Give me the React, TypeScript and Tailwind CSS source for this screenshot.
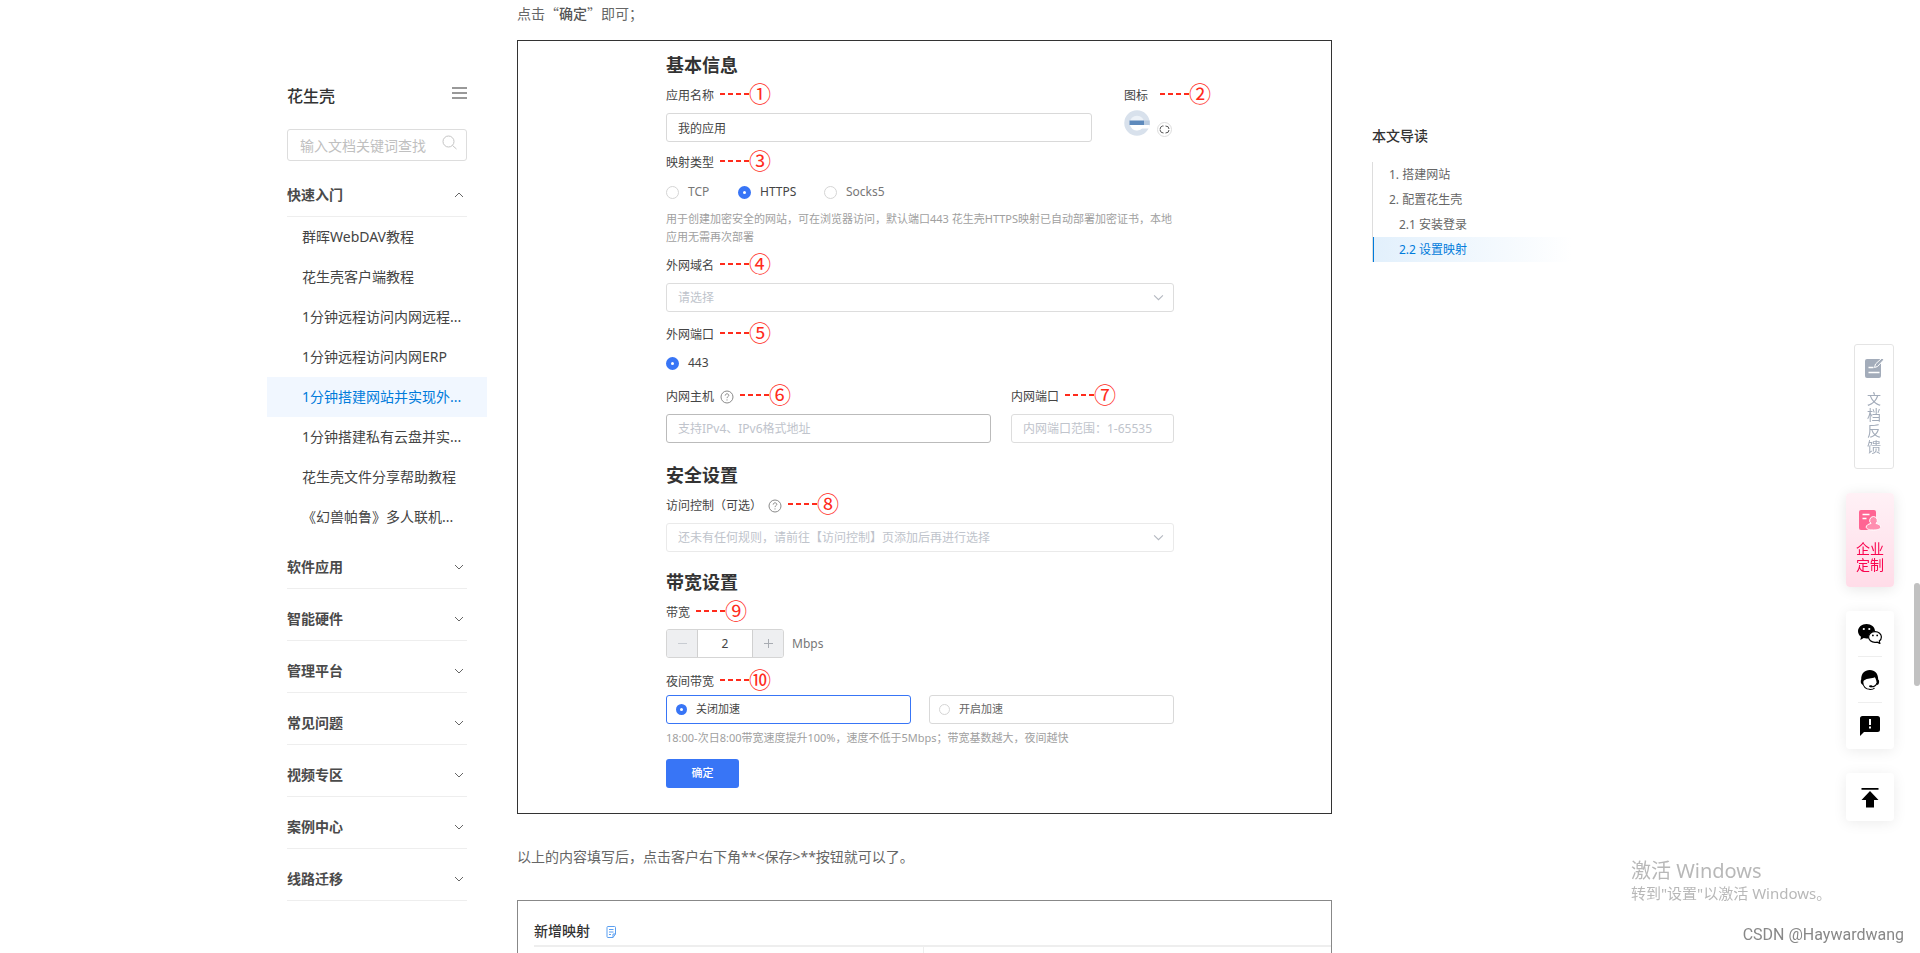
import { useState } from "react";

const groups = [
  "软件应用",
  "智能硬件",
  "管理平台",
  "常见问题",
  "视频专区",
  "案例中心",
  "线路迁移",
];

const guides = [
  "群晖WebDAV教程",
  "花生壳客户端教程",
  "1分钟远程访问内网远程...",
  "1分钟远程访问内网ERP",
  "1分钟搭建网站并实现外...",
  "1分钟搭建私有云盘并实...",
  "花生壳文件分享帮助教程",
  "《幻兽帕鲁》多人联机...",
];

const toc = [
  { text: "1. 搭建网站", sub: false },
  { text: "2. 配置花生壳", sub: false },
  { text: "2.1 安装登录", sub: true },
  { text: "2.2 设置映射", sub: true },
];

const Chevron: React.FC<{ className?: string }> = ({ className }) => (
  <svg viewBox="0 0 10 6" fill="none" stroke="currentColor" className={className}>
    <path d="M1 1l4 4 4-4" />
  </svg>
);

const Marker: React.FC<{ n: string }> = ({ n }) => (
  <span className="flex h-[22px] items-center text-[#ff2b1c]">
    <svg width="29" height="2" stroke="currentColor" strokeWidth="2">
      <path d="M0 1h29" strokeDasharray="5 3" />
    </svg>
    <span className="w-[22px] pb-1 text-center text-[22px] leading-[22px] font-['Noto_Sans_CJK_SC',sans-serif]">
      {n}
    </span>
  </span>
);

const Help = () => (
  <svg width="14" height="14" viewBox="0 0 14 14" fill="none" stroke="#8a8a8a" className="mb-[2px]">
    <circle cx="7" cy="7" r="6" />
    <path d="M5.2 5.6c0-2.400 3.600-2.300 3.600-.2 0 1.200-1.800 1.300-1.800 2.700M7 9.400v1.100" />
  </svg>
);

interface LabelProps {
  text: string;
  n: string;
  htmlFor?: string;
  help?: boolean;
}

const FieldLabel: React.FC<LabelProps> = ({ text, n, htmlFor, help }: LabelProps) => (
  <div className="flex h-[22px] items-end gap-[6px]">
    <label htmlFor={htmlFor} className="text-xs leading-[18px] text-[#444]">
      {text}
    </label>
    {help && <Help />}
    <Marker n={n} />
  </div>
);

interface RadioProps {
  name: string;
  text: string;
  checked?: boolean;
}

const Radio: React.FC<RadioProps> = ({ name, text, checked }: RadioProps) => (
  <label className="flex items-center gap-[9px] text-xs leading-[18px] text-[#777] has-checked:text-[#444]">
    <input
      type="radio"
      name={name}
      defaultChecked={checked}
      className="size-[13px] appearance-none rounded-full border border-[#d5d5d5] bg-white checked:border-[5px] checked:border-[#3875f6]"
    />
    {text}
  </label>
);

const SpeedOption: React.FC<RadioProps> = ({ name, text, checked }: RadioProps) => (
  <label className="flex h-[29px] flex-1 items-center gap-[9px] rounded-[3px] border border-[#d9d9d9] px-[9px] text-[11px] text-[#666] has-checked:border-[#3875f6] has-checked:text-[#444]">
    <input
      type="radio"
      name={name}
      defaultChecked={checked}
      className="size-[11px] appearance-none rounded-full border border-[#d5d5d5] bg-white checked:border-4 checked:border-[#3875f6]"
    />
    {text}
  </label>
);

interface SelectProps {
  id: string;
  placeholder: string;
  className: string;
}

const SelectBox: React.FC<SelectProps> = ({ id, placeholder, className }: SelectProps) => (
  <div className="relative mt-2">
    <select
      id={id}
      className={`block h-[29px] w-full appearance-none rounded-[3px] border bg-white px-[11px] text-xs text-[#c0c4cc] ${className}`}
    >
      <option>{placeholder}</option>
    </select>
    <Chevron className="pointer-events-none absolute top-[11px] right-[10px] h-[7px] w-[11px] text-[#b4b8c0]" />
  </div>
);

const Sidebar = () => {
  const [open, setOpen] = useState(true);

  return (
    <aside className="w-[220px] shrink-0 pt-20">
      <div className="flex h-8 items-center justify-between px-5">
        <h1 className="text-base font-medium text-[#333]">花生壳</h1>
        <button aria-label="菜单" className="flex h-[18px] w-[15px] flex-col gap-[3px]">
          <span className="h-[2px] w-full bg-[#999]" />
          <span className="h-[2px] w-full bg-[#999]" />
          <span className="h-[2px] w-full bg-[#999]" />
        </button>
      </div>
      <div className="relative mx-5 mt-[17px]">
        <input
          aria-label="搜索"
          placeholder="输入文档关键词查找"
          className="block h-8 w-full rounded-[3px] border border-[#ddd] pr-8 pl-3 text-sm text-[#444] placeholder:text-[#c0c0c0]"
        />
        <svg
          viewBox="0 0 15 15"
          fill="none"
          stroke="#c4c4c4"
          className="absolute top-[6px] right-[10px] size-[15px]"
        >
          <circle cx="6.500" cy="6.500" r="5.500" />
          <path d="M10.500 10.500l4 3.500" />
        </svg>
      </div>
      <div className="mt-1">
        <button onClick={() => setOpen(!open)} className="block w-full px-5 pt-[10px]">
          <span className="flex h-[42px] items-center justify-between border-b border-[#eee] pr-[3px] pb-px text-sm font-bold text-[#4a4a4a]">
            快速入门
            <Chevron className="h-[6px] w-[10px] rotate-180 text-[#666]" />
          </span>
        </button>
        {open && (
          <ul>
            {guides.map((g, i) => (
              <li key={g}>
                <a
                  href="#"
                  className={`block h-10 pl-[35px] text-sm leading-10 whitespace-nowrap ${
                    i === 4 ? "bg-[#f1f7ff] text-[#007bdb]" : "text-[#444]"
                  }`}
                >
                  {g}
                </a>
              </li>
            ))}
          </ul>
        )}
        {groups.map((g) => (
          <button key={g} className="block w-full px-5 pt-[10px]">
            <span className="flex h-[42px] items-center justify-between border-b border-[#eee] pr-[3px] pb-px text-sm font-bold text-[#4a4a4a]">
              {g}
              <Chevron className="h-[6px] w-[10px] text-[#666]" />
            </span>
          </button>
        ))}
      </div>
    </aside>
  );
};

const MappingForm = () => (
  <form
    onSubmit={(e) => e.preventDefault()}
    className="mt-4 border border-[#333] pt-[10px] pb-[25px] pl-[148px]"
  >
    <div className="w-[508px]">
      <h2 className="text-lg leading-7 font-bold text-[#333]">基本信息</h2>
      <div className="mt-1 flex gap-8">
        <div className="w-[426px] shrink-0">
          <FieldLabel text="应用名称" n="①" htmlFor="app" />
          <input
            id="app"
            defaultValue="我的应用"
            className="mt-2 block h-[29px] w-full rounded-[3px] border border-[#d9d9d9] px-[11px] text-xs text-[#444]"
          />
        </div>
        <div className="shrink-0">
          <div className="flex h-[22px] items-end gap-3 text-xs leading-[18px] text-[#444]">
            图标
            <Marker n="②" />
          </div>
          <div className="mt-1 flex items-end gap-[7px]">
            <svg width="26" height="28" viewBox="0 0 26 28">
              <circle cx="13" cy="14" r="10" fill="#edf2f8" stroke="#d8e1ec" strokeWidth="5.500" />
              <path d="M6 16h19.500v3.500H18q-2 2-5 2-5 0-7-5.500z" fill="#fff" />
              <path d="M20 11.500h5.700V16H20z" fill="#b9cbe0" />
              <path d="M5.500 11.500H20V16H5.500z" fill="#5e8abc" />
            </svg>
            <button
              type="button"
              aria-label="更换图标"
              className="flex size-[15px] items-center justify-center rounded-full border border-[#ddd]"
            >
              <svg width="11" height="9" viewBox="0 0 11 9" fill="none" stroke="#555">
                <path d="M4.500 1h-1Q1 1.500 1 4.500M1 5q.5 3 3.500 3M6.500 1Q10 1 10 4M10 5q0 3-3.500 3" />
              </svg>
            </button>
          </div>
        </div>
      </div>

      <div className="mt-2">
        <FieldLabel text="映射类型" n="③" />
        <div className="mt-[11px] flex">
          <div className="w-[72px]">
            <Radio name="type" text="TCP" />
          </div>
          <div className="w-[86px]">
            <Radio name="type" text="HTTPS" checked />
          </div>
          <Radio name="type" text="Socks5" />
        </div>
        <p className="mt-[9px] text-[11px] leading-[18px] text-[#a0a0a0]">
          用于创建加密安全的网站，可在浏览器访问，默认端口443
          花生壳HTTPS映射已自动部署加密证书，本地应用无需再次部署
        </p>
      </div>

      <div className="mt-[7px]">
        <FieldLabel text="外网域名" n="④" htmlFor="domain" />
        <SelectBox id="domain" placeholder="请选择" className="border-[#ddd]" />
      </div>

      <div className="mt-[10px]">
        <FieldLabel text="外网端口" n="⑤" />
        <div className="mt-[10px]">
          <Radio name="port" text="443" checked />
        </div>
      </div>

      <div className="mt-3 flex gap-5">
        <div className="w-[325px]">
          <FieldLabel text="内网主机" n="⑥" htmlFor="host" help />
          <input
            id="host"
            placeholder="支持IPv4、IPv6格式地址"
            className="mt-2 block h-[29px] w-full rounded-[3px] border border-[#bbb] px-[11px] text-xs placeholder:text-[#c0c4cc]"
          />
        </div>
        <div className="w-[163px]">
          <FieldLabel text="内网端口" n="⑦" htmlFor="inner" />
          <input
            id="inner"
            placeholder="内网端口范围：1-65535"
            className="mt-2 block h-[29px] w-full rounded-[3px] border border-[#ddd] px-[11px] text-xs placeholder:text-[#c0c4cc]"
          />
        </div>
      </div>

      <h2 className="mt-[18px] text-lg leading-7 font-bold text-[#333]">安全设置</h2>
      <div className="mt-1">
        <FieldLabel text="访问控制（可选）" n="⑧" htmlFor="rule" help />
        <SelectBox
          id="rule"
          placeholder="还未有任何规则，请前往【访问控制】页添加后再进行选择"
          className="border-[#eaeaea]"
        />
      </div>

      <h2 className="mt-4 text-lg leading-7 font-bold text-[#333]">带宽设置</h2>
      <div className="mt-1">
        <FieldLabel text="带宽" n="⑨" htmlFor="band" />
        <div className="mt-[7px] flex items-center gap-2 text-xs text-[#777]">
          <div className="flex h-[29px] w-[118px] overflow-hidden rounded-[3px] border border-[#d5d5d5]">
            <button type="button" aria-label="减少" className="flex w-[30px] items-center justify-center bg-[#eeeff1]">
              <span className="h-px w-[9px] bg-[#c8ccd2]" />
            </button>
            <input
              id="band"
              defaultValue="2"
              className="w-0 flex-1 border-x border-[#d0d0d0] text-center text-xs text-[#444]"
            />
            <button type="button" aria-label="增加" className="flex w-[30px] items-center justify-center bg-[#eeeff1]">
              <svg width="9" height="9" stroke="#a8acb2">
                <path d="M0 4.500h9M4.500 0v9" />
              </svg>
            </button>
          </div>
          Mbps
        </div>
      </div>

      <div className="mt-[11px]">
        <FieldLabel text="夜间带宽" n="⑩" />
        <div className="mt-1 flex gap-[18px]">
          <SpeedOption name="night" text="关闭加速" checked />
          <SpeedOption name="night" text="开启加速" />
        </div>
        <p className="mt-[5px] text-[11px] leading-[18px] text-[#a0a0a0]">
          18:00-次日8:00带宽速度提升100%，速度不低于5Mbps；带宽基数越大，夜间越快
        </p>
      </div>

      <button className="mt-3 block h-[29px] w-[73px] rounded-[3px] bg-[#3875f6] text-[11px] font-medium text-white">
        确定
      </button>
    </div>
  </form>
);

const Toc = () => (
  <nav className="w-[281px] shrink-0 pt-[126px]">
    <h3 className="text-sm leading-5 font-medium text-[#333]">本文导读</h3>
    <ul className="mt-4 w-[200px] border-l border-[#ddd]">
      {toc.map((t, i) => (
        <li key={t.text}>
          <a
            href="#"
            className={`block border-l text-xs leading-[25px] ${t.sub ? "pl-[25px]" : "pl-[15px]"} ${
              i === 3
                ? "border-[#007bdb] bg-linear-to-r from-[#e2f0fc] to-white text-[#007bdb]"
                : "border-transparent text-[#666]"
            }`}
          >
            {t.text}
          </a>
        </li>
      ))}
    </ul>
  </nav>
);

const ToolRail = () => (
  <div className="fixed top-[344px] right-[26px] flex flex-col items-end gap-6">
    <button className="flex h-[125px] w-10 flex-col items-center rounded-[3px] border border-[#e4e4e4] bg-white pt-3 text-sm leading-4 text-[#a3acba]">
      <svg width="20" height="22" viewBox="0 0 20 22">
        <path d="M1 4a2 2 0 0 1 2-2h14v17a2 2 0 0 1-2 2H3a2 2 0 0 1-2-2z" fill="#a3acba" />
        <path d="M4.500 10.500h5M4.500 15.500h11" stroke="#fff" strokeWidth="1.600" />
        <path d="M10.500 10.500l1-3.500 6.500-6 1.800 1.800-6.300 6.700z" fill="#a3acba" stroke="#fff" />
      </svg>
      <span className="mt-3 w-[14px]">文档反馈</span>
    </button>
    <button className="flex h-[94px] w-12 flex-col items-center rounded bg-linear-to-b from-[#fff1f6] to-[#ffdce8] pt-[17px] text-sm leading-4 text-[#f9054f] shadow-[0_2px_14px_rgba(0,0,0,0.1)]">
      <svg width="22" height="21" viewBox="0 0 22 21">
        <path d="M2 0h13a2 2 0 0 1 2 2v18H2a2 2 0 0 1-2-2V2a2 2 0 0 1 2-2z" fill="#ff6593" />
        <path d="M3.500 4.500h7M3.500 8.500h4" stroke="#fff" strokeWidth="1.500" />
        <path
          d="M14.500 6.500a4 4 0 0 1 2.500 7c3 .5 4.800 2 4.800 3.500 0 2-3 3-7.300 3s-7.300-1-7.300-3c0-1.500 1.800-3 4.800-3.500a4 4 0 0 1 2.500-7z"
          fill="#ff8fb0"
          stroke="#fff"
        />
      </svg>
      <span className="mt-[10px] w-7">企业定制</span>
    </button>
    <div className="flex w-12 flex-col items-center rounded bg-white shadow-[0_2px_14px_rgba(0,0,0,0.08)]">
      <button aria-label="微信" className="flex h-[46px] w-6 items-center justify-center border-b border-[#eee]">
        <svg width="24" height="20" viewBox="0 0 24 20">
          <path d="M8.500 0C3.800 0 0 3.200 0 7.200c0 2.200 1.200 4.200 3 5.500L2.300 16l3.400-1.900c.9.300 1.800.400 2.800.400 4.700 0 8.500-3.200 8.500-7.300S13.200 0 8.500 0z" />
          <path
            d="M17 7.600c-3.700 0-6.400 2.400-6.400 5.400s2.700 5.400 6.400 5.400c.8 0 1.500-.1 2.200-.3l2.600 1.300-.5-2.300c1.300-1 2.100-2.400 2.100-4.100 0-3-2.700-5.400-6.400-5.400z"
            fill="#fff"
            stroke="#000"
            strokeWidth="1.200"
          />
          <circle cx="5.800" cy="5" r="1.100" fill="#fff" />
          <circle cx="11.300" cy="5" r="1.100" fill="#fff" />
          <circle cx="14.900" cy="11.400" r=".9" />
          <circle cx="19.200" cy="11.400" r=".9" />
        </svg>
      </button>
      <button aria-label="客服" className="flex h-[46px] w-6 items-center justify-center border-b border-[#eee]">
        <svg width="20" height="22" viewBox="0 0 20 22">
          <path d="M1.200 10.500C1.200 4.500 4.500 1 9.800 1c5.200 0 8.300 3.500 8.400 9.500.8.500 1 1.500.9 2.700-.1 1.600-.9 2.600-2.300 2.800 0-3.500-.6-5.500-1.900-7.800-3.200 1.600-7.300.6-11 3.300-.7 1-.6 2.500-.6 4.200C1.700 15.500.8 14.500.8 13c0-1 0-2 .4-2.500z" />
          <path
            d="M2.400 13c.8 4.500 3.600 7.300 7.400 7.300M17 14c-.8 2.800-3 4-6.600 3.700M9.500 20.500c2.400.2 4.100-.4 5.100-1.500"
            fill="none"
            stroke="#000"
            strokeWidth="1.100"
          />
          <ellipse cx="10.800" cy="17.300" rx="1.800" ry="1" />
        </svg>
      </button>
      <button aria-label="反馈" className="flex h-[46px] w-6 items-center justify-center">
        <svg width="20" height="20" viewBox="0 0 20 20">
          <path d="M2.500 0h15A2.500 2.500 0 0 1 20 2.500v11a2.500 2.500 0 0 1-2.500 2.500H4l-4 4V2.500A2.500 2.500 0 0 1 2.500 0z" />
          <path d="M9 3h2v6H9zM9 10.500h2v2H9z" fill="#fff" />
        </svg>
      </button>
    </div>
    <button
      aria-label="回到顶部"
      className="flex size-12 items-center justify-center rounded bg-white pt-[2px] shadow-[0_2px_14px_rgba(0,0,0,0.08)]"
    >
      <svg width="18" height="20" viewBox="0 0 18 20">
        <path d="M.5 0h17v1.700H.5zM9 3l8.500 9H13v7.500H5V12H.5z" />
      </svg>
    </button>
  </div>
);

export default function App() {
  return (
    <div className="h-screen overflow-hidden bg-white font-['Noto_Sans','Noto_Sans_CJK_SC',sans-serif]">
      <div className="mx-auto flex max-w-[1386px]">
        <Sidebar />
        <main className="ml-[30px] mr-10 min-w-0 flex-1">
          <p className="pt-[2px] text-sm leading-[22px] text-[#666] font-['Noto_Sans_CJK_SC',sans-serif]">
            点击“<strong className="font-medium text-[#555]">确定</strong>”即可；
          </p>
          <MappingForm />
          <p className="mt-8 text-sm leading-[22px] text-[#666]">
            以上的内容填写后，点击客户右下角**&lt;保存&gt;**按钮就可以了。
          </p>
          <section className="mt-8 border border-[#888] pb-6 pl-4">
            <div className="flex h-[46px] items-end gap-4 border-b-2 border-[#eee] pb-1">
              <h3 className="text-sm leading-5 font-medium text-[#333]">新增映射</h3>
              <svg width="11" height="12" viewBox="0 0 11 12" fill="none" stroke="#5b9ff0" className="mb-[3px]">
                <path d="M2 .5h6.500a1 1 0 0 1 1 1V8M7 11.500H2a1 1 0 0 1-1-1v-9a1 1 0 0 1 1-1M3 3.500h4.500M3 6h4.500M3 8.500h2M7 11.500L9.500 8H7z" />
              </svg>
            </div>
            <div className="ml-[389px] h-16 border-l border-[#eee]" />
          </section>
        </main>
        <Toc />
      </div>
      <ToolRail />
      <div className="fixed top-[583px] right-0 h-[103px] w-[6px] rounded-full bg-[#c1c1c1]" />
      <div className="pointer-events-none fixed right-4 bottom-1 w-[273px] text-[#b8b8b8]">
        <p className="text-xl leading-6">激活 Windows</p>
        <p className="text-[15px] leading-5">转到"设置"以激活 Windows。</p>
        <p className="mt-[18px] text-right text-base leading-7 text-[#888] font-['Roboto',sans-serif]">
          CSDN @Haywardwang
        </p>
      </div>
    </div>
  );
}
